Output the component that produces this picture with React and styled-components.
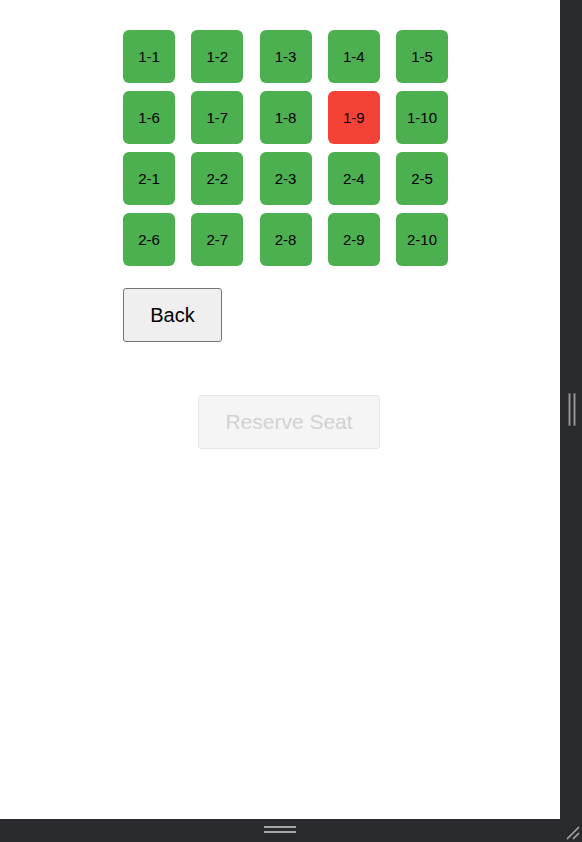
import React, { useState } from 'react';
import styled, { createGlobalStyle } from 'styled-components';

const GlobalStyle = createGlobalStyle`
  html, body {
    margin: 0;
    padding: 0;
    background: #292a2d;
    font-family: "Liberation Sans", Arial, sans-serif;
  }
`;

const Frame = styled.div`
  display: grid;
  grid-template-columns: 560px 22px;
  grid-template-rows: 819px 23px;
  width: 582px;
  height: 842px;
  background: #292a2d;
`;

const Page = styled.main`
  background: #ffffff;
  padding: 30px 0 0 123px;
  box-sizing: border-box;
`;

const SideBar = styled.div`
  display: flex;
  align-items: center;
  justify-content: center;
  gap: 2px;
  padding-left: 1px;
`;

const GripV = styled.span`
  width: 3px;
  height: 33px;
  background: #9a9a9a;
  border: 0.5px solid #5a5a5a;
  box-sizing: border-box;
`;

const BottomBar = styled.div`
  grid-column: 1 / 3;
  display: flex;
  align-items: center;
  position: relative;
  padding-left: 264px;
`;

const GripH = styled.div`
  display: flex;
  flex-direction: column;
  gap: 3px;
  margin-top: -3px;

  span {
    display: block;
    width: 32px;
    height: 2px;
    background: #a6a6a6;
  }
`;

const Corner = styled.svg`
  position: absolute;
  right: 2px;
  bottom: 2px;
`;

const SeatGrid = styled.div`
  display: grid;
  grid-template-columns: repeat(5, 52px);
  grid-auto-rows: 53px;
  column-gap: 16.25px;
  row-gap: 8px;
`;

const Seat = styled.button`
  border: none;
  border-radius: 6px;
  background: ${p => (p.$taken ? '#f44336' : '#4caf50')};
  color: #000;
  font-family: "Liberation Sans", Arial, sans-serif;
  font-size: 15px;
  padding: 0;
  cursor: pointer;
`;

const BackButton = styled.button`
  display: block;
  margin-top: 22px;
  width: 99px;
  height: 54px;
  background: #efefef;
  border: 1px solid #767676;
  border-radius: 3px;
  color: #000;
  font-family: "Liberation Sans", Arial, sans-serif;
  font-size: 20px;
  cursor: pointer;
`;

const ReserveButton = styled.button`
  display: block;
  margin: 53px 0 0 75px;
  width: 182px;
  height: 54px;
  background: #f5f5f5;
  border: 1px solid #e6e6e6;
  border-radius: 3px;
  color: #d2d2d2;
  font-family: "Liberation Sans", Arial, sans-serif;
  font-size: 21px;
`;

const seats = [];
for (let r = 1; r <= 2; r++) {
  for (let c = 1; c <= 10; c++) seats.push(`${r}-${c}`);
}

export default function App() {
  const [picked, setPicked] = useState(null);

  return (
    <>
      <GlobalStyle />
      <Frame>
        <Page>
          <SeatGrid>
            {seats.map(s => (
              <Seat key={s} $taken={s === '1-9'} onClick={() => setPicked(s)}>
                {s}
              </Seat>
            ))}
          </SeatGrid>
          <BackButton>Back</BackButton>
          <ReserveButton disabled={!picked}>Reserve Seat</ReserveButton>
        </Page>
        <SideBar>
          <GripV />
          <GripV />
        </SideBar>
        <BottomBar>
          <GripH>
            <span />
            <span />
          </GripH>
          <Corner width="16" height="16" viewBox="0 0 16 16">
            <path d="M15 3 L3 15 M15 9 L9 15" stroke="#a6a6a6" strokeWidth="1.6" />
          </Corner>
        </BottomBar>
      </Frame>
    </>
  );
}
